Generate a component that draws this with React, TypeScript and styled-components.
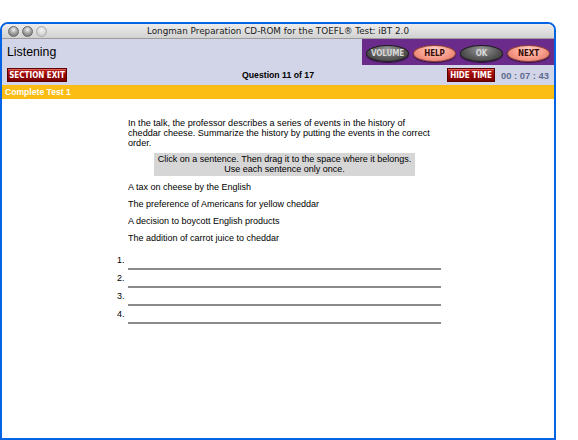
import React from "react";
import styled, { createGlobalStyle } from "styled-components";

const GlobalStyle = createGlobalStyle`
  html, body {
    margin: 0;
    padding: 0;
    background: #fff;
  }
  body {
    font-family: "Liberation Sans", Arial, sans-serif;
    color: #000;
  }
`;

const Window = styled.div`
  box-sizing: border-box;
  width: 556px;
  height: 418px;
  margin-top: 22px;
  border: 2px solid #0563e6;
  border-radius: 8px 8px 0 0;
  display: flex;
  flex-direction: column;
  overflow: hidden;
  background: #fff;
`;

const TitleBar = styled.div`
  box-sizing: border-box;
  height: 15px;
  display: grid;
  grid-template-columns: 1fr auto 1fr;
  align-items: center;
  background: linear-gradient(#ececec, #d2d2d2);
  border-bottom: 1px solid #9c9c9c;
  padding: 0 6px;
`;

const Lights = styled.div`
  display: flex;
  gap: 3px;
`;

const Light = styled.span<{ $inactive?: boolean }>`
  box-sizing: border-box;
  width: 11px;
  height: 11px;
  border-radius: 50%;
  border: 1px solid ${(p) => (p.$inactive ? "#a9a9a9" : "#6b6b6b")};
  background: ${(p) =>
    p.$inactive
      ? "radial-gradient(circle at 50% 35%, #f4f4f4, #cfcfcf 70%)"
      : "radial-gradient(circle at 50% 30%, #f0f0f0 0, #a8a8a8 45%, #7c7c7c 80%)"};
`;

const Title = styled.div`
  font-family: "DejaVu Sans", sans-serif;
  font-size: 8.8px;
  color: #1a1a1a;
  white-space: nowrap;
`;

const Header = styled.div`
  background: #d2d5e7;
`;

const TopRow = styled.div`
  height: 26px;
  display: flex;
  align-items: center;
  justify-content: space-between;
`;

const Section = styled.div`
  padding-left: 5px;
  font-size: 12.3px;
  color: #000;
`;

const Controls = styled.div`
  box-sizing: border-box;
  align-self: stretch;
  width: 192px;
  background: #6a2b8b;
  display: flex;
  align-items: center;
  gap: 4px;
  padding: 2px 0 0 4px;
`;

const Pill = styled.div<{ $tone: "dark" | "pink" }>`
  box-sizing: border-box;
  width: 43px;
  height: 17px;
  border-radius: 50%;
  display: flex;
  align-items: center;
  justify-content: center;
  font-family: "Liberation Sans Narrow", "DejaVu Sans Condensed", sans-serif;
  font-weight: bold;
  font-size: 8px;
  letter-spacing: -0.1px;
  border: 1px solid ${(p) => (p.$tone === "dark" ? "#1e1e1e" : "#8f3f38")};
  color: ${(p) => (p.$tone === "dark" ? "#d8d8d8" : "#3a0d08")};
  background: ${(p) =>
    p.$tone === "dark"
      ? "radial-gradient(ellipse at 50% 25%, #9a9a9a 0, #5a5a5a 55%, #323232 100%)"
      : "radial-gradient(ellipse at 50% 25%, #ffd2c6 0, #f79a88 55%, #d8705f 100%)"};
  box-shadow: 0 1px 1px rgba(0, 0, 0, 0.55);
`;

const InfoRow = styled.div`
  height: 20px;
  display: grid;
  grid-template-columns: 1fr auto 1fr;
  align-items: center;
  padding: 0 5px;
`;

const RedButton = styled.div<{ $width: number }>`
  box-sizing: border-box;
  width: ${(p) => p.$width}px;
  height: 14px;
  display: flex;
  align-items: center;
  justify-content: center;
  background: linear-gradient(#c4251f, #950404 55%, #7a0000);
  border: 1px solid #5b0000;
  box-shadow: inset 0 1px 0 rgba(255, 170, 170, 0.45);
  color: #fff;
  font-family: "Liberation Sans Narrow", "DejaVu Sans Condensed", sans-serif;
  font-weight: bold;
  font-size: 8px;
`;

const Question = styled.div`
  font-weight: bold;
  font-size: 8.7px;
`;

const Timing = styled.div`
  display: flex;
  align-items: center;
  justify-content: flex-end;
  gap: 6px;
`;

const Clock = styled.div`
  font-weight: bold;
  font-size: 9.4px;
  color: #5c6b8e;
`;

const TestBar = styled.div`
  height: 14px;
  display: flex;
  align-items: center;
  padding-left: 3px;
  background: #fbbd13;
  color: #fff;
  font-weight: bold;
  font-size: 8.6px;
`;

const Content = styled.div`
  flex: 1;
  padding: 19px 0 0 115px;
`;

const Column = styled.div`
  width: 324px;
  font-size: 9px;
`;

const Prompt = styled.p`
  margin: 0 0 0 11px;
  line-height: 10px;
  width: 306px;
  font-size: 9.1px;
`;

const Instruction = styled.div`
  margin: 5px 0 0 37px;
  width: 261px;
  padding: 2px 0;
  background: #d6d6d6;
  text-align: center;
  line-height: 9.5px;
`;

const Choices = styled.div`
  margin: 3px 0 0 11px;
`;

const Choice = styled.div`
  line-height: 17px;
`;

const Answers = styled.div`
  margin-top: 8px;
  display: flex;
  flex-direction: column;
  gap: 3px;
`;

const AnswerRow = styled.div`
  display: grid;
  grid-template-columns: 11px 1fr;
`;

const Number = styled.div`
  line-height: 10px;
`;

const Slot = styled.div`
  height: 13px;
  border-bottom: 2px solid #8a8a8a;
`;

const choices = [
  "A tax on cheese by the English",
  "The preference of Americans for yellow cheddar",
  "A decision to boycott English products",
  "The addition of carrot juice to cheddar",
];

export default function App() {
  return (
    <>
      <GlobalStyle />
      <Window>
        <TitleBar>
          <Lights>
            <Light />
            <Light />
            <Light $inactive />
          </Lights>
          <Title>Longman Preparation CD-ROM for the TOEFL® Test: iBT 2.0</Title>
          <span />
        </TitleBar>
        <Header>
          <TopRow>
            <Section>Listening</Section>
            <Controls>
              <Pill $tone="dark">VOLUME</Pill>
              <Pill $tone="pink">HELP</Pill>
              <Pill $tone="dark">OK</Pill>
              <Pill $tone="pink">NEXT</Pill>
            </Controls>
          </TopRow>
          <InfoRow>
            <div>
              <RedButton $width={60}>SECTION EXIT</RedButton>
            </div>
            <Question>Question 11 of 17</Question>
            <Timing>
              <RedButton $width={48}>HIDE TIME</RedButton>
              <Clock>00 : 07 : 43</Clock>
            </Timing>
          </InfoRow>
        </Header>
        <TestBar>Complete Test 1</TestBar>
        <Content>
          <Column>
            <Prompt>
              In the talk, the professor describes a series of events in the
              history of cheddar cheese. Summarize the history by putting the
              events in the correct order.
            </Prompt>
            <Instruction>
              Click on a sentence. Then drag it to the space where it belongs.
              <br />
              Use each sentence only once.
            </Instruction>
            <Choices>
              {choices.map((c) => (
                <Choice key={c}>{c}</Choice>
              ))}
            </Choices>
            <Answers>
              {[1, 2, 3, 4].map((n) => (
                <AnswerRow key={n}>
                  <Number>{n}.</Number>
                  <Slot />
                </AnswerRow>
              ))}
            </Answers>
          </Column>
        </Content>
      </Window>
    </>
  );
}
